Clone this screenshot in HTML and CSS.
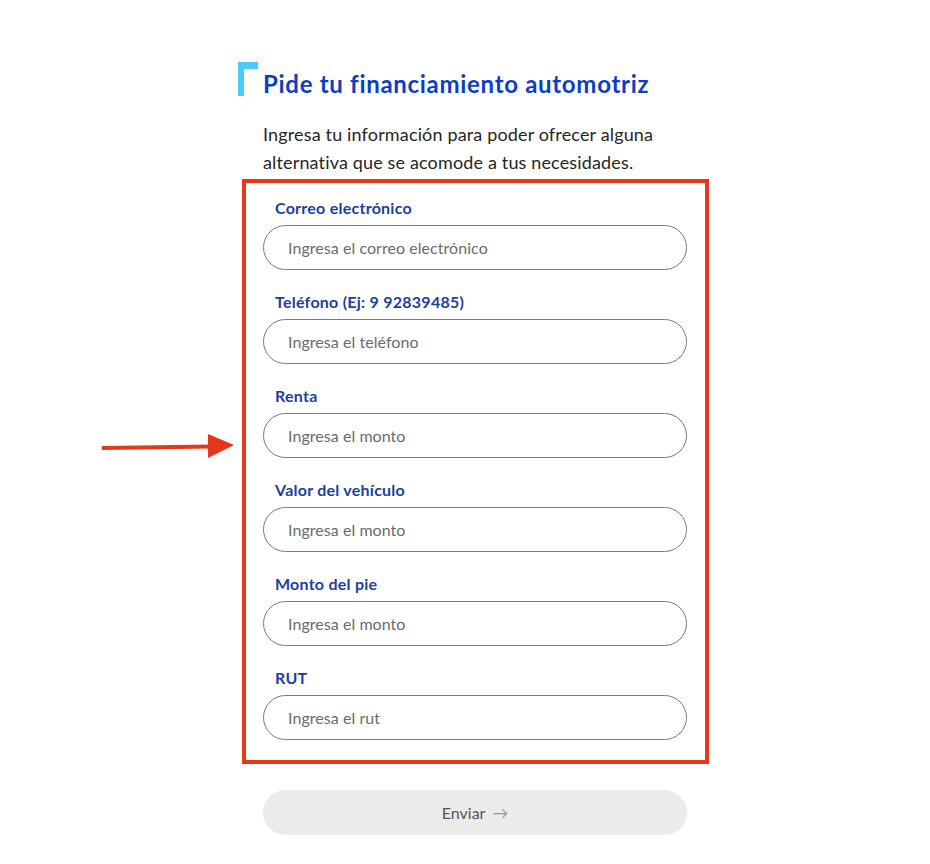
FILE: index.html
```html
<!DOCTYPE html>
<html lang="es">
<head>
    <meta charset="UTF-8">
    <meta name="viewport" content="width=device-width, initial-scale=1.0">
    <title>Pide tu financiamiento automotriz</title>
    <link rel="stylesheet" href="styles.css">
</head>
<body>
    <svg class="pointer-arrow" width="140" height="30" viewBox="0 0 140 30" aria-hidden="true">
        <line x1="2" y1="17" x2="112" y2="15.5" stroke="#e8361c" stroke-width="4"/>
        <polygon points="108,3 134,14 108,27" fill="#e8361c"/>
    </svg>

    <div class="container">
        <div class="heading">
            <svg class="accent" width="20" height="34" viewBox="0 0 20 34" aria-hidden="true">
                <path d="M0 0 H20 V7 H6 V34 H0 Z" fill="#4ccaf5"/>
            </svg>
            <h1>Pide tu financiamiento automotriz</h1>
        </div>

        <p class="intro">Ingresa tu información para poder ofrecer alguna alternativa que se acomode a tus necesidades.</p>

        <form class="loan-form">
            <div class="fields">
                <div class="field">
                    <label for="email">Correo electrónico</label>
                    <input id="email" type="text" placeholder="Ingresa el correo electrónico">
                </div>
                <div class="field">
                    <label for="phone">Teléfono (Ej: 9 92839485)</label>
                    <input id="phone" type="text" placeholder="Ingresa el teléfono">
                </div>
                <div class="field">
                    <label for="income">Renta</label>
                    <input id="income" type="text" placeholder="Ingresa el monto">
                </div>
                <div class="field">
                    <label for="price">Valor del vehículo</label>
                    <input id="price" type="text" placeholder="Ingresa el monto">
                </div>
                <div class="field">
                    <label for="down">Monto del pie</label>
                    <input id="down" type="text" placeholder="Ingresa el monto">
                </div>
                <div class="field">
                    <label for="rut">RUT</label>
                    <input id="rut" type="text" placeholder="Ingresa el rut">
                </div>
            </div>

            <button type="button" class="submit-btn" disabled>Enviar <span class="btn-arrow">&rarr;</span></button>
        </form>
    </div>
</body>
</html>
```

FILE: styles.css
```css
:root {
    --title-color: #0b3ec4;
    --label-color: #1b3f9e;
    --text-color: #262626;
    --border-color: #7a7a7a;
    --mark-color: #e8361c;
}

* {
    box-sizing: border-box;
    margin: 0;
    padding: 0;
}

body {
    font-family: 'Lato', 'Noto Sans', sans-serif;
    color: var(--text-color);
    background: white;
    position: relative;
    min-height: 864px;
}

.container {
    width: 471px;
    margin-left: 238px;
    padding-top: 62px;
}

.heading {
    display: flex;
    align-items: flex-start;
}

.accent {
    flex-shrink: 0;
}

.heading h1 {
    margin-left: 5px;
    margin-top: 7px;
    font-size: 24px;
    line-height: 30px;
    font-weight: 700;
    letter-spacing: 0.7px;
    color: var(--title-color);
}

.intro {
    margin: 21px 0 3px 25px;
    width: 430px;
    font-size: 18px;
    line-height: 28px;
    letter-spacing: 0.15px;
}

.fields {
    margin-left: 4px;
    width: 467px;
    border: 4px solid var(--mark-color);
    padding: 15px 18px 20px 17px;
    display: flex;
    flex-direction: column;
    gap: 22px;
}

.field {
    display: flex;
    flex-direction: column;
    gap: 7px;
}

.field label {
    padding-left: 12px;
    font-size: 16px;
    line-height: 20px;
    font-weight: 700;
    letter-spacing: 0.25px;
    color: var(--label-color);
}

.field input {
    width: 424px;
    height: 45px;
    border: 1px solid var(--border-color);
    border-radius: 23px;
    padding: 0 24px;
    font-family: inherit;
    font-size: 16px;
    letter-spacing: 0.05px;
    color: var(--text-color);
    background: white;
    outline: none;
}

.field input::placeholder {
    color: #6b6b6b;
}

.submit-btn {
    display: block;
    margin: 26px 0 0 25px;
    width: 424px;
    height: 45px;
    border: none;
    border-radius: 23px;
    background: #ebebeb;
    font-family: inherit;
    font-size: 16px;
    color: #555;
}

.btn-arrow {
    color: #999;
    margin-left: 3px;
}

.pointer-arrow {
    position: absolute;
    left: 100px;
    top: 431px;
}
```
